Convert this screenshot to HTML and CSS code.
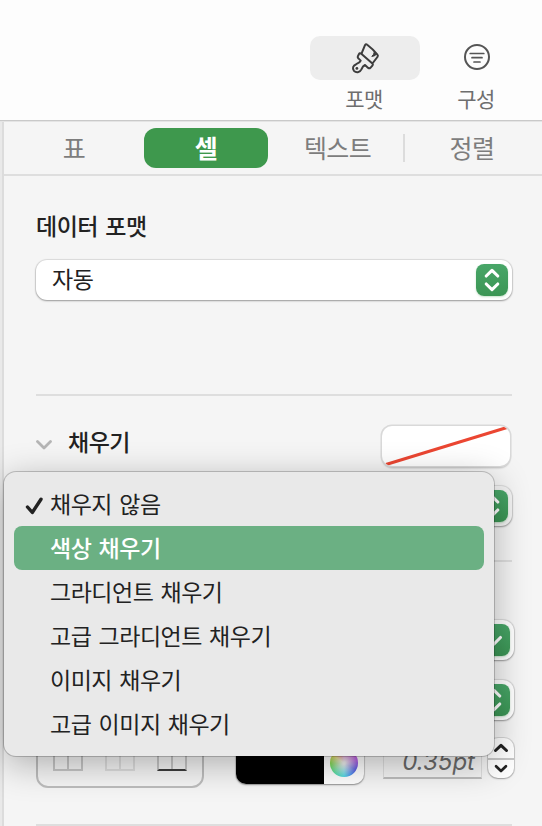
FILE: index.html
```html
<!DOCTYPE html>
<html lang="ko">
<head>
    <meta charset="UTF-8">
    <meta name="viewport" content="width=device-width, initial-scale=1.0">
    <title>포맷</title>
    <link rel="stylesheet" href="styles.css">
</head>
<body>
    <header class="toolbar">
        <div class="tool">
            <div class="tool-icon on">
                <svg width="30" height="34" viewBox="0 0 30 34" fill="none" stroke="#3c3c3c" stroke-width="2" stroke-linejoin="round" stroke-linecap="round">
                    <path d="M11.5 12.6L15 4.2Q15.8 2.6 17.2 3.8Q22.5 7.8 27.4 13.6Q28.4 14.8 27.4 16L22.8 22"/>
                    <path d="M26.3 13.4Q24.8 15.2 21.8 15.4Q24 13.6 24.3 11.2Z" fill="#3c3c3c" stroke-width="1"/>
                    <path d="M11 12.6Q9.8 11.8 9 13L7.8 15.4Q7.4 16.6 8.4 17.4L10.7 19.6Q10 21.6 6.2 23.2C3 24.4 2 27.2 4 29.8C6 32 9.8 31.8 11.4 28.3Q12.8 25 15 24L18.2 26.9Q19.4 27.8 20.4 26.8L22.4 24.6Q23.4 23.6 22.4 22.6Z"/>
                    <circle cx="6.9" cy="27.4" r="1.4" fill="#3c3c3c" stroke="none"/>
                </svg>
            </div>
            <span>포맷</span>
        </div>
        <div class="tool">
            <div class="tool-icon">
                <svg width="28" height="28" viewBox="0 0 28 28" fill="none" stroke="#555" stroke-width="2" stroke-linecap="round">
                    <circle cx="14" cy="14" r="12"/>
                    <path d="M7.2 10.5H20.8M9 14.7H19M11 19H17" stroke-width="1.7"/>
                </svg>
            </div>
            <span>구성</span>
        </div>
    </header>

    <main class="panel">
        <nav class="tabs">
            <a class="tab">표</a>
            <a class="tab active">셀</a>
            <a class="tab">텍스트</a>
            <a class="tab line">정렬</a>
        </nav>

        <section class="format">
            <h2>데이터 포맷</h2>
            <div class="select">
                자동
                <span class="knob"><svg width="32" height="32" viewBox="0 0 32 32"><path d="M10.2 12L16 6.3L21.8 12M10.2 20L16 25.7L21.8 20"/></svg></span>
            </div>
        </section>

        <section class="fill">
            <div class="fill-head">
                <svg class="arrow" width="16" height="12" viewBox="0 0 16 12"><path d="M1.5 2.5L8 9L14.5 2.5"/></svg>
                <h2>채우기</h2>
                <div class="swatch"><svg width="128" height="40" viewBox="0 0 128 40"><path d="M4 38.5L125 1.5"/></svg></div>
            </div>
            <div class="select gray">
                <span class="knob"><svg width="32" height="32" viewBox="0 0 32 32"><path d="M10.2 12L16 6.3L21.8 12M10.2 20L16 25.7L21.8 20"/></svg></span>
            </div>
        </section>

        <section class="border">
            <div class="select">
                <span class="knob"><svg width="32" height="32" viewBox="0 0 32 32"><path d="M9.5 13.5L16 20L22.5 13.5"/></svg></span>
            </div>
            <div class="select">
                <span class="knob"><svg width="32" height="32" viewBox="0 0 32 32"><path d="M10.2 12L16 6.3L21.8 12M10.2 20L16 25.7L21.8 20"/></svg></span>
            </div>
            <div class="border-row">
                <div class="lines">
                    <i class="cell"></i>
                    <i class="cell light"></i>
                    <i class="cell bottom"></i>
                </div>
                <div class="well">
                    <div class="color"></div>
                    <div class="wheel"></div>
                </div>
                <div class="size">0.35pt</div>
                <div class="stepper">
                    <svg width="26" height="20" viewBox="0 0 26 20"><path d="M7.5 12.5L13 7.3L18.5 12.5"/></svg>
                    <svg width="26" height="20" viewBox="0 0 26 20"><path d="M7.5 7L13 12.2L18.5 7"/></svg>
                </div>
            </div>
        </section>
    </main>

    <ul class="menu">
        <li><svg class="check" width="20" height="20" viewBox="0 0 20 20"><path d="M3.5 11L8.3 16.5L17 3.2"/></svg>채우지 않음</li>
        <li class="hover">색상 채우기</li>
        <li>그라디언트 채우기</li>
        <li>고급 그라디언트 채우기</li>
        <li>이미지 채우기</li>
        <li>고급 이미지 채우기</li>
    </ul>
</body>
</html>
```
FILE: styles.css
```css
*{box-sizing:border-box;}
body{margin:0; width:542px; height:826px; position:relative; overflow:hidden; background:#f5f5f5; color:#222; font-family:"Noto Sans CJK KR", sans-serif; font-size:23px; letter-spacing:-0.5px; word-spacing:1.3px;}
h2{margin:0; font-size:23px; font-weight:500; line-height:32px;}
svg{display:block; flex:none;}

.toolbar{display:flex; justify-content:flex-end; gap:2px; height:122px; padding:36px 10px 0 0; background:#fdfdfd; border-bottom:1px solid #e4e4e4; box-shadow:inset 0 -1px #c9c9c9;}
.tool{width:110px; text-align:center; font-size:21px; line-height:30px; color:#6e6e6e;}
.tool span{display:block; margin:3px 2px 0 0;}
.tool-icon{display:flex; align-items:center; justify-content:center; height:44px; padding-bottom:2px; border-radius:10px;}
.tool-icon.on{background:#ededed; padding:0 1px 1px 0;}

.panel{height:704px; border-left:2px solid #e9e9e9; box-shadow:inset 2px 0 #dcdcdc; padding-left:2px;}
.tabs{display:flex; align-items:center; height:54px; padding:0 3px 0 8px; border-bottom:2px solid #dedede;}
.tab{display:flex; align-items:center; justify-content:center; width:132px; height:40px; padding:0 8px 2px 0; font-size:25px; letter-spacing:-0.6px; color:#7d7d7d;}
.tab.active{width:124px; padding-right:0; background:#3e984d; color:#fff; font-weight:700; border-radius:12px;}
.tab:nth-child(3){width:135px; padding:0 0 2px 4px;}
.tab.line{height:28px; border-left:2px solid #dcdcdc; width:136px; padding-right:0;}

section{margin:0 30px 0 32px; border-bottom:2px solid #dedede;}
.format{height:220px; padding-top:33px;}
.fill{height:166px; padding-top:30px;}
.border{height:264px; padding-top:58px;}

.select{display:flex; align-items:center; height:40px; padding:0 4px 3px 16px; background:#fff; border-radius:11px; box-shadow:0 0 1px 1px rgba(0,0,0,.1), 0 1px 2px rgba(0,0,0,.3);}
.format .select{margin-top:19px; padding-bottom:4px;}
.knob{margin:3px 0 0 auto; width:32px; height:32px; border-radius:8px; background:linear-gradient(#48a668, #3b9554); box-shadow:0 1px 2px rgba(62,152,77,.3);}
.format .knob{margin-top:4px;}
.knob path{fill:none; stroke:#fff; stroke-width:3.1; stroke-linecap:round; stroke-linejoin:round;}
.gray{margin-top:20px; background:#f3f3f3;}
.border .select{margin:0 -2px 20px 80px;}

.fill-head{display:flex; height:40px;}
.arrow{margin-top:13px;}
.arrow path{fill:none; stroke:#b5b5b5; stroke-width:2.8; stroke-linecap:round; stroke-linejoin:round;}
.fill-head h2{margin:-1px 0 0 16px;}
.swatch{margin:0 2px 0 auto; width:128px; height:40px; background:#fff; border-radius:10px; overflow:hidden; box-shadow:0 0 0 1.5px #d9d9d9, 0 2px 2px rgba(0,0,0,.3);}
.swatch path{stroke:#eb4632; stroke-width:3;}

.border-row{display:flex; margin-right:-2px; height:46px; margin-top:-2px;}
.lines{display:flex; align-items:flex-end; gap:22px; width:168px; height:50px; padding:0 15px 15px; border:2px solid #bdbdbd; border-radius:0 0 12px 12px;}
.cell{width:30px; height:30px; border:2px solid #c6c6c6; background:linear-gradient(#c6c6c6, #c6c6c6) center / 2px 100% no-repeat;}
.light{border-color:#dedede; background:linear-gradient(#dedede, #dedede) center / 2px 100% no-repeat;}
.bottom{border-bottom-color:#3c3c3c;}
.well{display:flex; align-items:center; width:128px; height:46px; margin-left:32px; background:#fff; border-radius:10px; overflow:hidden; box-shadow:0 0 0 1px rgba(0,0,0,.1), 0 1px 2px rgba(0,0,0,.35);}
.color{width:88px; height:100%; background:#000;}
.wheel{width:28px; height:28px; margin:4px 0 0 6px; border-radius:50%; background:radial-gradient(circle, #eee 5%, rgba(238,238,238,0) 75%), conic-gradient(#d85cc0, #b04ce0 75deg, #4a4ce0 120deg, #3f8cf0 150deg, #43d8e4 180deg, #4edc98 225deg, #72d646 265deg, #dcd24c 305deg, #e8665c 335deg, #d85cc0);}
.size{width:99px; height:41px; margin-left:19px; padding-right:6px; border:1px solid #dedede; border-bottom:2px solid #bdbdbd; font:italic 24px/46px Inter, sans-serif; letter-spacing:0; text-align:right; color:#6b6b6b;}
.stepper{width:26px; height:40px; margin-left:6px; background:#fff; border-radius:10px; box-shadow:0 0 0 1px rgba(0,0,0,.12), 0 1px 2px rgba(0,0,0,.25);}
.stepper svg + svg{border-top:2px solid #c8c8c8;}
.stepper path{fill:none; stroke:#222; stroke-width:3; stroke-linecap:round; stroke-linejoin:round;}

/* 채우기 팝업 메뉴 */
.menu{position:absolute; left:4px; top:472px; width:490px; height:284px; margin:0; padding:10px; list-style:none; background:#e9e9e9; border-radius:12px; box-shadow:0 0 0 1px rgba(0,0,0,.2), 0 8px 36px rgba(0,0,0,.3);}
.menu li{position:relative; height:44px; padding-left:36px; line-height:42px; border-radius:8px;}
.menu .hover{background:#6bb083; color:#fff; font-weight:500;}
.check{position:absolute; left:10px; top:14px;}
.check path{fill:none; stroke:#222; stroke-width:3.4; stroke-linecap:round; stroke-linejoin:round;}
```
